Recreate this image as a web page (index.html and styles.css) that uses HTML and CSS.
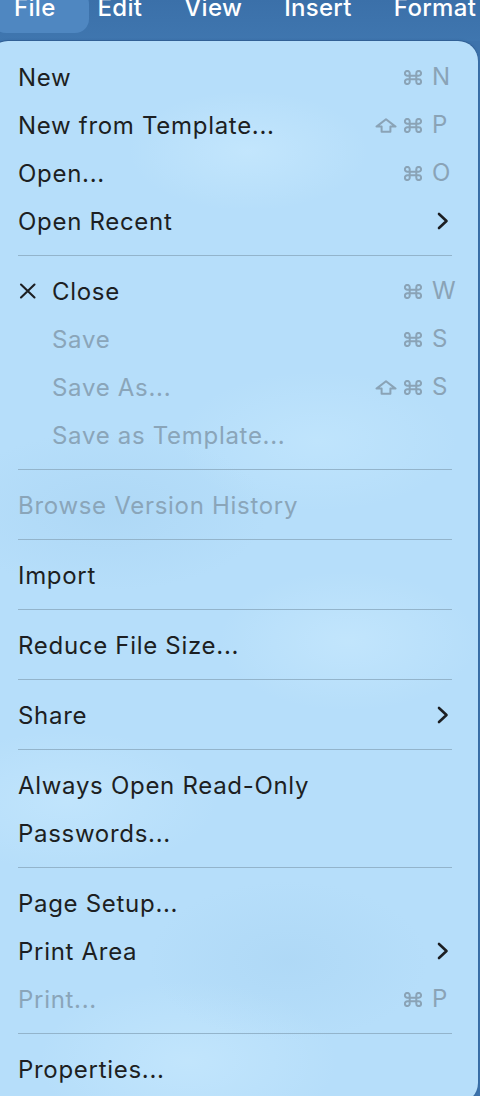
FILE: index.html
```html
<!DOCTYPE html>
<html lang="en">
<head>
<meta charset="utf-8">
<title>File menu</title>
<link rel="stylesheet" href="styles.css">
</head>
<body>
<div class="menubar">
  <div class="mitem active">File</div>
  <div class="mitem">Edit</div>
  <div class="mitem">View</div>
  <div class="mitem">Insert</div>
  <div class="mitem">Format</div>
</div>

<div class="panel">
  <div class="row"><span class="label">New</span>
    <span class="sc"><span></span><svg class="cmd" viewBox="0 0 18 15"><path d="M5.7 5.7H12.3V9.3H5.7Z M5.7 5.7V3.3A2.4 2.4 0 1 0 3.3 5.7H5.7 M12.3 5.7V3.3A2.4 2.4 0 1 1 14.7 5.7H12.3 M5.7 9.3V11.7A2.4 2.4 0 1 1 3.3 9.3H5.7 M12.3 9.3V11.7A2.4 2.4 0 1 0 14.7 9.3H12.3"/></svg><span class="key">N</span></span></div>
  <div class="row"><span class="label">New from Template...</span>
    <span class="sc"><svg class="shift" viewBox="0 0 22 15"><path d="M11 1.2 L20.5 8.6 H15.4 V13.8 H6.6 V8.6 H1.5 Z"/></svg><svg class="cmd" viewBox="0 0 18 15"><path d="M5.7 5.7H12.3V9.3H5.7Z M5.7 5.7V3.3A2.4 2.4 0 1 0 3.3 5.7H5.7 M12.3 5.7V3.3A2.4 2.4 0 1 1 14.7 5.7H12.3 M5.7 9.3V11.7A2.4 2.4 0 1 1 3.3 9.3H5.7 M12.3 9.3V11.7A2.4 2.4 0 1 0 14.7 9.3H12.3"/></svg><span class="key">P</span></span></div>
  <div class="row"><span class="label">Open...</span>
    <span class="sc"><span></span><svg class="cmd" viewBox="0 0 18 15"><path d="M5.7 5.7H12.3V9.3H5.7Z M5.7 5.7V3.3A2.4 2.4 0 1 0 3.3 5.7H5.7 M12.3 5.7V3.3A2.4 2.4 0 1 1 14.7 5.7H12.3 M5.7 9.3V11.7A2.4 2.4 0 1 1 3.3 9.3H5.7 M12.3 9.3V11.7A2.4 2.4 0 1 0 14.7 9.3H12.3"/></svg><span class="key">O</span></span></div>
  <div class="row"><span class="label">Open Recent</span>
    <svg class="chev" viewBox="0 0 12 18"><path d="M2 2 L9.5 9 L2 16"/></svg></div>

  <div class="sep"></div>

  <div class="row"><span class="icon"><svg class="x" viewBox="0 0 18 16"><path d="M2 1.5 L15.5 14.5 M15.5 1.5 L2 14.5"/></svg></span><span class="label">Close</span>
    <span class="sc"><span></span><svg class="cmd" viewBox="0 0 18 15"><path d="M5.7 5.7H12.3V9.3H5.7Z M5.7 5.7V3.3A2.4 2.4 0 1 0 3.3 5.7H5.7 M12.3 5.7V3.3A2.4 2.4 0 1 1 14.7 5.7H12.3 M5.7 9.3V11.7A2.4 2.4 0 1 1 3.3 9.3H5.7 M12.3 9.3V11.7A2.4 2.4 0 1 0 14.7 9.3H12.3"/></svg><span class="key">W</span></span></div>
  <div class="row dis"><span class="icon"></span><span class="label">Save</span>
    <span class="sc"><span></span><svg class="cmd" viewBox="0 0 18 15"><path d="M5.7 5.7H12.3V9.3H5.7Z M5.7 5.7V3.3A2.4 2.4 0 1 0 3.3 5.7H5.7 M12.3 5.7V3.3A2.4 2.4 0 1 1 14.7 5.7H12.3 M5.7 9.3V11.7A2.4 2.4 0 1 1 3.3 9.3H5.7 M12.3 9.3V11.7A2.4 2.4 0 1 0 14.7 9.3H12.3"/></svg><span class="key">S</span></span></div>
  <div class="row dis"><span class="icon"></span><span class="label">Save As...</span>
    <span class="sc"><svg class="shift" viewBox="0 0 22 15"><path d="M11 1.2 L20.5 8.6 H15.4 V13.8 H6.6 V8.6 H1.5 Z"/></svg><svg class="cmd" viewBox="0 0 18 15"><path d="M5.7 5.7H12.3V9.3H5.7Z M5.7 5.7V3.3A2.4 2.4 0 1 0 3.3 5.7H5.7 M12.3 5.7V3.3A2.4 2.4 0 1 1 14.7 5.7H12.3 M5.7 9.3V11.7A2.4 2.4 0 1 1 3.3 9.3H5.7 M12.3 9.3V11.7A2.4 2.4 0 1 0 14.7 9.3H12.3"/></svg><span class="key">S</span></span></div>
  <div class="row dis"><span class="icon"></span><span class="label">Save as Template...</span></div>

  <div class="sep"></div>

  <div class="row dis"><span class="label">Browse Version History</span></div>

  <div class="sep"></div>

  <div class="row"><span class="label">Import</span></div>

  <div class="sep"></div>

  <div class="row"><span class="label">Reduce File Size...</span></div>

  <div class="sep"></div>

  <div class="row"><span class="label">Share</span>
    <svg class="chev" viewBox="0 0 12 18"><path d="M2 2 L9.5 9 L2 16"/></svg></div>

  <div class="sep"></div>

  <div class="row"><span class="label">Always Open Read-Only</span></div>
  <div class="row"><span class="label">Passwords...</span></div>

  <div class="sep"></div>

  <div class="row"><span class="label">Page Setup...</span></div>
  <div class="row"><span class="label">Print Area</span>
    <svg class="chev" viewBox="0 0 12 18"><path d="M2 2 L9.5 9 L2 16"/></svg></div>
  <div class="row dis"><span class="label">Print...</span>
    <span class="sc"><span></span><svg class="cmd" viewBox="0 0 18 15"><path d="M5.7 5.7H12.3V9.3H5.7Z M5.7 5.7V3.3A2.4 2.4 0 1 0 3.3 5.7H5.7 M12.3 5.7V3.3A2.4 2.4 0 1 1 14.7 5.7H12.3 M5.7 9.3V11.7A2.4 2.4 0 1 1 3.3 9.3H5.7 M12.3 9.3V11.7A2.4 2.4 0 1 0 14.7 9.3H12.3"/></svg><span class="key">P</span></span></div>

  <div class="sep"></div>

  <div class="row"><span class="label">Properties...</span></div>
</div>
</body>
</html>
```

FILE: styles.css
```css
html, body {
  margin: 0;
  padding: 0;
}

body {
  width: 480px;
  height: 1096px;
  overflow: hidden;
  background: #3d73ac;
  font-family: Inter, "Open Sans", "Liberation Sans", sans-serif;
}

.menubar {
  display: flex;
  height: 41px;
  background: linear-gradient(#3b70a9, #3f76af);
}

.mitem {
  margin-top: -10px;
  height: 43px;
  padding: 6px 21px 0 21px;
  box-sizing: border-box;
  font-size: 24px;
  line-height: 24px;
  font-weight: 500;
  letter-spacing: 0.3px;
  color: #ffffff;
  white-space: nowrap;
}

.mitem.active {
  margin-left: -8px;
  margin-right: -12px;
  padding-left: 22px;
  padding-right: 33px;
  border-radius: 14px;
  background: #4f87c1;
}

.panel {
  margin-left: -12px;
  width: 490px;
  height: 1062px;
  box-sizing: border-box;
  padding: 12px 22px 0 30px;
  border-radius: 20px;
  background:
    radial-gradient(ellipse 120px 60px at 260px 110px, rgba(205, 236, 255, 0.55), transparent),
    radial-gradient(ellipse 140px 70px at 330px 400px, rgba(200, 234, 255, 0.5), transparent),
    radial-gradient(ellipse 160px 80px at 120px 470px, rgba(160, 205, 238, 0.35), transparent),
    radial-gradient(ellipse 130px 70px at 360px 600px, rgba(205, 236, 255, 0.5), transparent),
    radial-gradient(ellipse 150px 70px at 80px 760px, rgba(205, 236, 255, 0.45), transparent),
    radial-gradient(ellipse 140px 80px at 300px 920px, rgba(160, 205, 238, 0.3), transparent),
    radial-gradient(ellipse 150px 80px at 200px 1020px, rgba(205, 236, 255, 0.5), transparent),
    #b6defa;
  box-shadow: 0 -1px 0 rgba(40, 80, 130, 0.45), 0 0 3px rgba(20, 60, 110, 0.35);
}

.row {
  display: flex;
  align-items: center;
  height: 48px;
  font-size: 24px;
  letter-spacing: 0.7px;
  color: #1d1f22;
  white-space: nowrap;
}

.row.dis {
  color: #8aa5b9;
}

.label {
  flex: 1;
}

.icon {
  width: 34px;
  flex: none;
  display: flex;
  align-items: center;
}

.x {
  width: 18px;
  height: 16px;
  margin-left: 1px;
  fill: none;
  stroke: #1d1f22;
  stroke-width: 2.1;
  stroke-linecap: round;
}

.sc {
  display: grid;
  grid-template-columns: 22px 18px 25px;
  column-gap: 8px;
  align-items: center;
  color: #8aa3b6;
}

.sc .key {
  margin-left: 1px;
  line-height: 24px;
  letter-spacing: 0;
}

.shift {
  width: 22px;
  height: 15px;
  fill: none;
  stroke: #8aa3b6;
  stroke-width: 2;
  stroke-linejoin: round;
}

.cmd {
  width: 18px;
  height: 15px;
  margin-left: -1px;
  fill: none;
  stroke: #8aa3b6;
  stroke-width: 2;
}

.chev {
  width: 12px;
  height: 18px;
  margin-right: 7px;
  fill: none;
  stroke: #1d1f22;
  stroke-width: 2.6;
  stroke-linecap: round;
  stroke-linejoin: round;
}

.sep {
  height: 1px;
  margin: 10px 4px 11px 0;
  background: #93b4cb;
}
```
